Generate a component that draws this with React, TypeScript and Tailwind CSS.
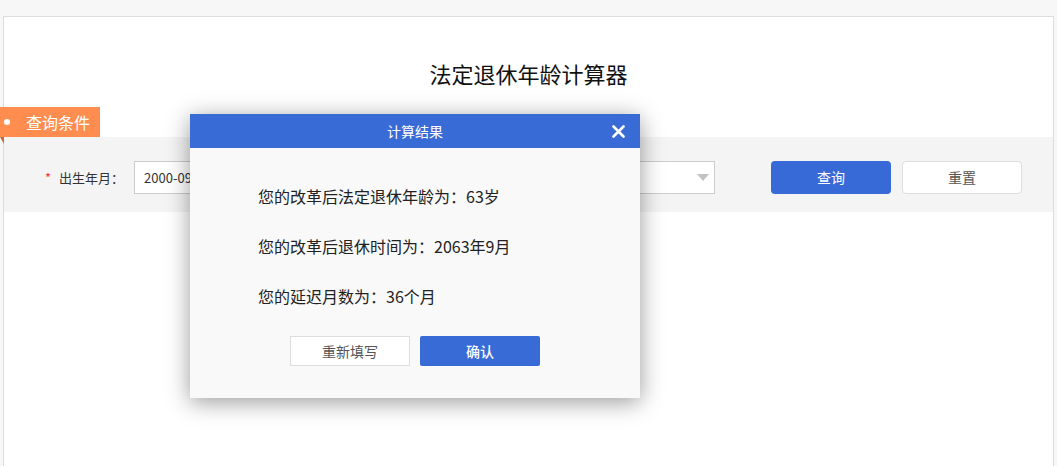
const FONT = "font-['Noto_Sans_CJK_SC','Noto_Sans',sans-serif]"

const RESULTS = [
  '您的改革后法定退休年龄为：63岁',
  '您的改革后退休时间为：2063年9月',
  '您的延迟月数为：36个月',
]

function ResultDialog() {
  return (
    <div className="absolute left-[190px] top-[114px] w-[450px] h-[284px] bg-[#f9f9f9] shadow-[0_4px_22px_rgba(0,0,0,0.4)]">
      {/* header */}
      <div className="relative h-[34px] bg-[#386bd5] flex items-center justify-center">
        <span className="text-white text-[14px]">计算结果</span>
        <svg className="absolute right-[15px] top-[11px]" width="13" height="13" viewBox="0 0 13 13">
          <path d="M1.5 1.5 L11.5 11.5 M11.5 1.5 L1.5 11.5" stroke="#fff" strokeWidth="2.6" strokeLinecap="round" />
        </svg>
      </div>

      {/* body */}
      <div className="pt-[23px] pl-[68px] [text-spacing-trim:space-all]">
        {RESULTS.map((line) => (
          <div key={line} className="leading-[50px] text-[16px] text-[#222]">{line}</div>
        ))}
      </div>

      <div className="mt-[15px] flex justify-center gap-[10px]">
        <button className="w-[120px] h-[30px] bg-white border border-[#ddd] text-[14px] text-[#555]">重新填写</button>
        <button className="w-[120px] h-[30px] bg-[#386bd5] rounded-[2px] text-[14px] text-white font-medium">确认</button>
      </div>
    </div>
  )
}

export default function App() {
  return (
    <div className={`${FONT} relative min-h-[466px] bg-[#f7f7f7] pt-[16px] px-[3px]`}>
      <div className="h-[450px] bg-white border border-[#ddd] border-b-0">
        {/* title */}
        <div className="h-[90px] pt-[41px] text-center">
          <h1 className="text-[22px] leading-[30px] text-[#111]">法定退休年龄计算器</h1>
        </div>

        {/* section tag */}
        <div className="relative -ml-[4px] w-[100px] h-[30px] bg-[#ff8d4f] flex items-center">
          <span className="ml-[4px] w-[6px] h-[6px] rounded-full bg-white" />
          <span className="ml-[16px] text-[16px] text-white">查询条件</span>
          <svg className="absolute left-0 top-full" width="4" height="7" viewBox="0 0 4 7">
            <path d="M0 0 L4 0 L4 7 Z" fill="#c96a35" />
          </svg>
        </div>

        {/* query form band */}
        <div className="h-[75px] bg-[#f4f4f4] flex items-center pt-[6px] pl-[41px]">
          <span className="text-[#f33] text-[13px] mr-[8px]">*</span>
          <span className="text-[13px] text-[#333]">出生年月：</span>
          <div className="ml-[10px] w-[581px] h-[33px] bg-white border border-[#ccc] flex items-center justify-between pl-[9px] pr-[5px]">
            <span className="text-[13px] text-[#333]">2000-09</span>
            <svg width="12" height="7" viewBox="0 0 12 7">
              <path d="M0 0 L12 0 L6 7 Z" fill="#c2c2c2" />
            </svg>
          </div>
          <button className="ml-[56px] w-[120px] h-[33px] bg-[#376ad6] rounded-[4px] text-[14px] text-white">查询</button>
          <button className="ml-[11px] w-[120px] h-[33px] bg-white border border-[#ddd] rounded-[4px] text-[14px] text-[#555]">重置</button>
        </div>
      </div>

      <ResultDialog />
    </div>
  )
}
